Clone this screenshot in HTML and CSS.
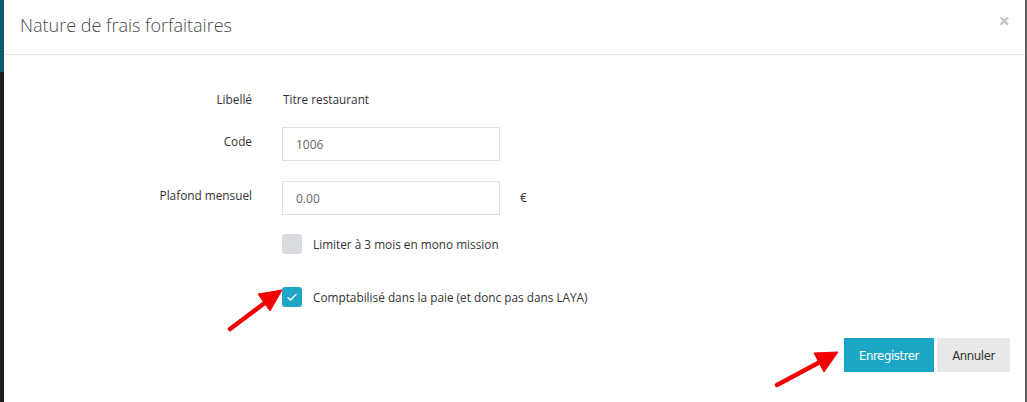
FILE: index.html
```html
<!DOCTYPE html>
<html lang="fr">
<head>
<meta charset="utf-8">
<title>Nature de frais forfaitaires</title>
<link rel="stylesheet" href="styles.css">
</head>
<body>
<div class="screen">
  <div class="left-strip"><div class="strip-top"></div><div class="strip-bottom"></div></div>
  <div class="modal">
    <div class="modal-header">
      <h4 class="modal-title">Nature de frais forfaitaires</h4>
      <span class="close">×</span>
    </div>
    <div class="modal-body">
      <div class="row row-libelle">
        <div class="label">Libellé</div>
        <div class="value">Titre restaurant</div>
      </div>
      <div class="row row-code">
        <div class="label label-input">Code</div>
        <div class="input">1006</div>
      </div>
      <div class="row row-plafond">
        <div class="label label-input">Plafond mensuel</div>
        <div class="input">0.00</div>
        <div class="unit">€</div>
      </div>
      <div class="row row-check1">
        <div class="label"></div>
        <span class="checkbox"></span>
        <span class="check-label">Limiter à 3 mois en mono mission</span>
      </div>
      <div class="row row-check2">
        <div class="label"></div>
        <span class="checkbox checked">
          <svg width="12" height="10" viewBox="0 0 12 10"><path d="M1.5 5.2 L4.5 8 L10.5 2" fill="none" stroke="#fff" stroke-width="1.3"/></svg>
        </span>
        <span class="check-label">Comptabilisé dans la paie (et donc pas dans LAYA)</span>
      </div>
    </div>
    <div class="modal-footer">
      <button class="btn btn-primary">Enregistrer</button>
      <button class="btn btn-default">Annuler</button>
    </div>
  </div>
  <div class="right-strip"></div>
  <svg class="arrows" width="1027" height="402" viewBox="0 0 1027 402">
    <g fill="#f40000" stroke="#f40000">
      <line x1="230" y1="329" x2="266" y2="302" stroke-width="4.5" stroke-linecap="round"/>
      <polygon points="282,290 258,294 270,311" stroke-width="1"/>
      <line x1="777" y1="385" x2="820" y2="362" stroke-width="4.5" stroke-linecap="round"/>
      <polygon points="838,352 814,353 824,372" stroke-width="1"/>
    </g>
  </svg>
</div>
</body>
</html>
```

FILE: styles.css
```css
* { box-sizing: border-box; }
html, body { margin: 0; padding: 0; background: #fff; }
body { font-family: "Open Sans", "Noto Sans", sans-serif; color: #333; }

.screen {
  position: relative;
  width: 1027px;
  height: 402px;
  display: flex;
  overflow: hidden;
}

.left-strip { width: 4px; display: flex; flex-direction: column; }
.strip-top { height: 72px; background: #0e5d6c; }
.strip-bottom { flex: 1; background: #1d1d1f; }
.right-strip { width: 2px; background: #5a5a5a; }

.modal { flex: 1; background: #fff; display: flex; flex-direction: column; }

.modal-header {
  height: 55px;
  border-bottom: 1px solid #e5e5e5;
  display: flex;
  align-items: center;
  justify-content: space-between;
  padding: 0 15px 0 16px;
}
.modal-title {
  margin: 0;
  font-weight: 300;
  font-size: 18px;
  color: #4a4a4a;
  padding-bottom: 5px;
}
.close {
  color: #c4c4c4;
  font-size: 20px;
  font-weight: 700;
  line-height: 1;
  padding-bottom: 12px;
}

.modal-body { display: flex; flex-direction: column; padding-top: 34px; font-size: 11.8px; }
.row { display: flex; align-items: center; }
.label { width: 248px; text-align: right; padding-right: 0; flex: none; }
.row-libelle { height: 20px; }
.row-libelle .value { margin-left: 31px; }
.row-code { margin-top: 18px; align-items: flex-start; }
.row-plafond { margin-top: 20px; align-items: flex-start; }
.label-input { padding-top: 6px; }
.input {
  margin-left: 30px;
  width: 218px;
  height: 34px;
  border: 1px solid #e0e0e0;
  padding: 0 13px;
  display: flex;
  align-items: center;
  color: #666;
  font-size: 12px;
}
.unit { margin-left: 20px; padding-top: 8px; font-size: 12px; }

.row-check1 { margin-top: 19px; }
.row-check2 { margin-top: 33px; }
.checkbox {
  margin-left: 30px;
  width: 20px;
  height: 20px;
  border-radius: 3px;
  background: #d8dce0;
  display: flex;
  align-items: center;
  justify-content: center;
  flex: none;
}
.checkbox.checked { background: #1fa5c7; }
.check-label { margin-left: 11px; }

.modal-footer {
  display: flex;
  justify-content: flex-end;
  gap: 3px;
  padding: 0 15px 0 0;
  margin-top: 31px;
}
.btn {
  height: 34px;
  border: 0;
  font-family: "DejaVu Sans Condensed", "DejaVu Sans", sans-serif;
  font-stretch: condensed;
  font-size: 13px;
  letter-spacing: -0.4px;
  padding: 0;
  cursor: pointer;
}
.btn-primary { width: 90px; background: #1ca6c5; color: #fff; }
.btn-default { width: 73px; background: #e8e8e8; color: #333; }

.arrows { position: absolute; left: 0; top: 0; pointer-events: none; }
```
